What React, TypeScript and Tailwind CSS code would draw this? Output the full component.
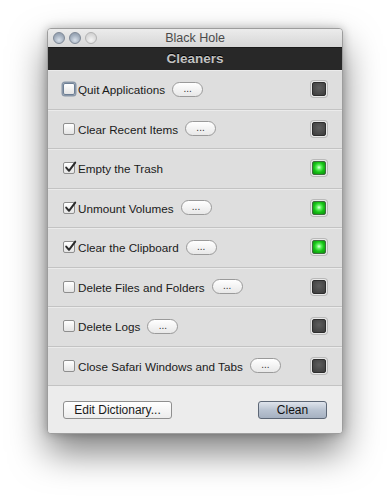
import React from "react";

const rows = [
  { label: "Quit Applications", checked: false, more: true, on: false, focus: true },
  { label: "Clear Recent Items", checked: false, more: true, on: false },
  { label: "Empty the Trash", checked: true, more: false, on: true },
  { label: "Unmount Volumes", checked: true, more: true, on: true },
  { label: "Clear the Clipboard", checked: true, more: true, on: true },
  { label: "Delete Files and Folders", checked: false, more: true, on: false },
  { label: "Delete Logs", checked: false, more: true, on: false },
  { label: "Close Safari Windows and Tabs", checked: false, more: true, on: false },
];

const font = { fontFamily: '"Liberation Sans", Arial, sans-serif' };

function Checkbox({ checked, focus }: { checked: boolean; focus?: boolean }) {
  return (
    <div
      className={`relative shrink-0 w-[12px] h-[12px] rounded-[2px] border bg-gradient-to-b from-[#ffffff] to-[#e4e4e4] ${
        focus ? "border-[#6d7f95] shadow-[0_0_0_1.5px_#8a97a8]" : "border-[#8e8e8e]"
      }`}
    >
      {checked && (
        <svg className="absolute left-[0px] top-[-2px]" width="13" height="13" viewBox="0 0 13 13">
          <path d="M2.2 6.6 L5 9.8 L11.2 1.6" fill="none" stroke="#2a2a2a" strokeWidth="2" strokeLinecap="round" strokeLinejoin="round" />
        </svg>
      )}
    </div>
  );
}

function Led({ on }: { on: boolean }) {
  return (
    <div className="w-[16px] h-[16px] rounded-[3px] bg-[#e9e9e9] p-[1px] shadow-[0_0_0_1px_#b9b9b9]">
      <div
        className={`w-full h-full rounded-[2px] border ${
          on
            ? "border-[#3f6b3f] bg-[radial-gradient(circle_at_50%_45%,#e6ffe6_0%,#5df25d_25%,#16c316_55%,#0c8a0c_100%)]"
            : "border-[#2e2e2e] bg-[radial-gradient(circle_at_50%_40%,#5e5e5e_0%,#4a4a4a_60%,#3c3c3c_100%)]"
        }`}
      />
    </div>
  );
}

function MoreButton() {
  return (
    <div className="ml-[7px] w-[31px] h-[15px] rounded-full border border-[#9a9a9a] bg-gradient-to-b from-[#ffffff] to-[#e8e8e8] flex items-center justify-center text-[10px] leading-none text-[#333] pb-[1px]">
      ...
    </div>
  );
}

export default function App() {
  return (
    <div className="w-[390px] h-[500px] bg-white pt-[28px] pl-[47px]" style={font}>
      <div className="w-[296px] rounded-[4px] border border-[#9d9d9d] overflow-hidden shadow-[0_18px_36px_rgba(0,0,0,0.5),0_0_10px_rgba(0,0,0,0.25)] bg-[#ececec]">
        {/* title bar */}
        <div className="relative h-[18px] bg-gradient-to-b from-[#ececec] to-[#d6d6d6] flex items-center justify-center">
          <div className="absolute left-[5px] top-[3px] flex gap-[4px]">
            <div className="w-[12px] h-[12px] rounded-full border border-[#7e8896] bg-[radial-gradient(circle_at_50%_70%,#d8e0ea_0%,#a0acbb_60%,#8a96a6_100%)]" />
            <div className="w-[12px] h-[12px] rounded-full border border-[#7e8896] bg-[radial-gradient(circle_at_50%_70%,#d8e0ea_0%,#a0acbb_60%,#8a96a6_100%)]" />
            <div className="w-[12px] h-[12px] rounded-full border border-[#b3b3b3] bg-[radial-gradient(circle_at_50%_70%,#f4f4f4_0%,#d9d9d9_60%,#cccccc_100%)]" />
          </div>
          <span className="text-[12.5px] text-[#4a4a4a] leading-none pt-[1px]">Black Hole</span>
        </div>
        {/* dark bar */}
        <div className="h-[23px] bg-[#282828] border-t border-[#1a1a1a] flex items-center justify-center">
          <span className="text-[13.5px] font-bold text-[#c2c2c2] leading-none [text-shadow:0_-1px_0_#000]">Cleaners</span>
        </div>
        {/* rows */}
        <div className="h-[316px] flex flex-col bg-[#dedede]">
          {rows.map((r, i) => (
            <div
              key={i}
              className="flex-1 flex items-center pl-[15px] pr-[15px] border-b border-[#c3c3c3] shadow-[inset_0_1px_0_#ebebeb]"
            >
              <Checkbox checked={r.checked} focus={r.focus} />
              <span className="ml-[3px] text-[11.7px] text-[#1a1a1a] leading-[14px] pt-[2px]">{r.label}</span>
              {r.more && <MoreButton />}
              <div className="ml-auto">
                <Led on={r.on} />
              </div>
            </div>
          ))}
        </div>
        {/* bottom */}
        <div className="h-[47px] flex items-center justify-between px-[15px] bg-[#ececec]">
          <div className="w-[109px] h-[18px] rounded-[3px] border border-[#8f8f8f] bg-gradient-to-b from-[#ffffff] to-[#ececec] flex items-center justify-center text-[12px] text-[#1a1a1a] leading-none">
            Edit Dictionary...
          </div>
          <div className="w-[69px] h-[18px] rounded-[3px] border border-[#5d6776] bg-gradient-to-b from-[#dfe4ec] via-[#b9c3d1] to-[#a6b1c1] flex items-center justify-center text-[12px] text-[#111] leading-none">
            Clean
          </div>
        </div>
      </div>
    </div>
  );
}
